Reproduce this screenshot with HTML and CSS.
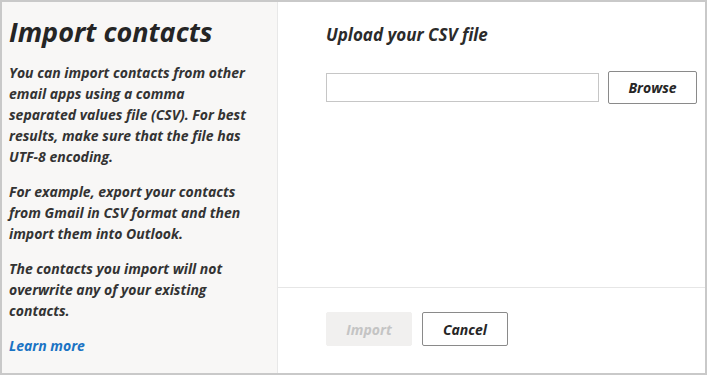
FILE: index.html
```html
<!DOCTYPE html>
<html>
<head>
  <meta charset="utf-8">
  <link rel="stylesheet" href="styles.css">
</head>
<body>
  <div class="dialog">
    <div class="side">
      <h1 class="side__title">Import contacts</h1>
      <p>You can import contacts from other<br>email apps using a comma<br>separated values file (CSV). For best<br>results, make sure that the file has<br>UTF-8 encoding.</p>
      <p>For example, export your contacts<br>from Gmail in CSV format and then<br>import them into Outlook.</p>
      <p>The contacts you import will not<br>overwrite any of your existing<br>contacts.</p>
      <a class="side__link" href="#">Learn more</a>
    </div>
    <div class="main">
      <div class="main__body">
        <div class="main__label">Upload your CSV file</div>
        <div class="upload">
          <input class="upload__field" type="text">
          <button class="btn btn--browse">Browse</button>
        </div>
      </div>
      <div class="main__footer">
        <button class="btn btn--disabled" disabled>Import</button>
        <button class="btn">Cancel</button>
      </div>
    </div>
  </div>
</body>
</html>
```

FILE: styles.css
```css
* {
  box-sizing: border-box;
}

body {
  margin: 0;
  background: #fff;
  font-family: 'Open Sans', 'Noto Sans', sans-serif;
  font-weight: 700;
  font-style: italic;
  color: #333;
  -webkit-font-smoothing: antialiased;
}

.dialog {
  width: 707px;
  height: 375px;
  border: 2px solid #c9c9c9;
  display: flex;
  overflow: hidden;
}

.side {
  width: 276px;
  flex-shrink: 0;
  background: #f8f7f6;
  border-right: 1px solid #e8e8e8;
  padding: 12px 8px 0 7px;
  font-size: 14px;
  line-height: 21px;
  white-space: nowrap;
}

.side__title {
  margin: 0 0 12px;
  font-size: 27px;
  line-height: 36px;
  font-weight: 700;
  color: #252525;
}

.side p {
  margin: 0 0 14px;
}

.side__link {
  color: #1a73c4;
  text-decoration: none;
}

.main {
  flex: 1;
  display: flex;
  flex-direction: column;
}

.main__body {
  flex: 1;
  padding: 21px 8px 0 48px;
  border-bottom: 1px solid #e6e6e6;
}

.main__label {
  font-size: 17px;
  line-height: 24px;
  margin-bottom: 24px;
  color: #2b2b2b;
}

.upload {
  display: flex;
  align-items: center;
  gap: 9px;
}

.upload__field {
  width: 273px;
  height: 29px;
  border: 1px solid #c6c6c6;
  background: #fff;
  margin: 0;
}

.btn {
  width: 86px;
  height: 34px;
  border: 1px solid #8a8a8a;
  border-radius: 2px;
  background: #fff;
  color: #262626;
  font: inherit;
  font-size: 14px;
  padding: 0;
}

.btn--browse {
  width: 89px;
  height: 33px;
}

.btn--disabled {
  border-color: #f1f0ef;
  background: #f1f0ef;
  color: #c4c4c4;
}

.main__footer {
  height: 85px;
  flex-shrink: 0;
  display: flex;
  gap: 10px;
  padding: 24px 0 0 48px;
}
```
